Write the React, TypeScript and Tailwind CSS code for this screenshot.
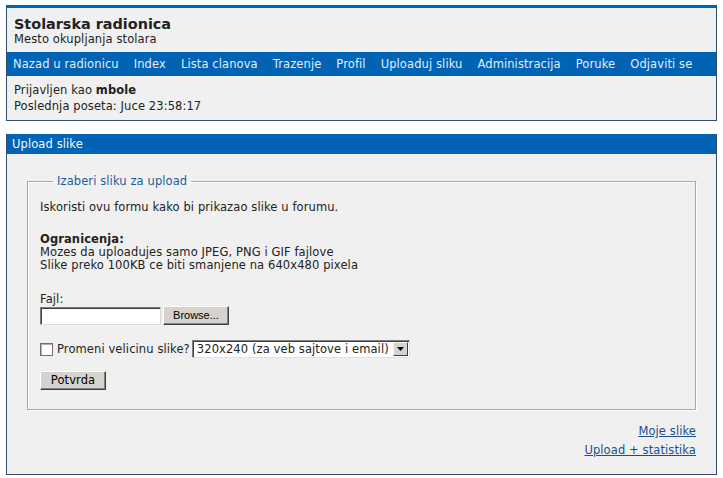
import React from "react";

const navItems = [
  "Nazad u radionicu",
  "Index",
  "Lista clanova",
  "Trazenje",
  "Profil",
  "Uploaduj sliku",
  "Administracija",
  "Poruke",
  "Odjaviti se",
];

export default function App() {
  return (
    <div className="min-h-[478px] bg-white px-[6px] pt-[5px] font-['DejaVu_Sans',Verdana,sans-serif] text-[11.5px] leading-[16px] tracking-[0.1px] text-[#222]">
      {/* Site header */}
      <div className="border border-t-[3px] border-[#34506c] border-t-[#0063b4] bg-[#f0f0f0]">
        <div className="border-t border-x border-[#e4f2fb] px-[6px] pb-[6px] pt-[7px]">
          <h1 className="text-[14.4px] font-bold leading-[16px] tracking-normal text-[#222]">Stolarska radionica</h1>
          <div className="leading-[14px]">Mesto okupljanja stolara</div>
        </div>
        <nav className="flex h-[24px] items-center gap-[15px] bg-[#0063b4] px-[6px] text-[#e3eef9]">
          {navItems.map((item) => (
            <a key={item} href="#" className="whitespace-nowrap">
              {item}
            </a>
          ))}
        </nav>
        <div className="border-x border-b border-[#e4f2fb] px-[6px] pb-[5px] pt-[6px] leading-[16px]">
          <div>
            Prijavljen kao <b>mbole</b>
          </div>
          <div>Poslednja poseta: Juce 23:58:17</div>
        </div>
      </div>

      {/* Upload panel */}
      <div className="mt-[13px] border border-t-0 border-[#34506c] bg-[#f0f0f0]">
        <div className="flex h-[20px] items-center bg-[#0063b4] px-[5px] text-[#f4f8fc]">Upload slike</div>
        <div className="border-x border-b border-[#e4f2fb] px-[19px] pb-[15px] pt-[19px]">
          <fieldset className="border border-[#a6a6a6] px-[12px] pb-[19px] pt-[4px] shadow-[inset_1px_1px_0_#fff,1px_1px_0_#fff]">
            <legend className="ml-[13px] px-[4px] text-[#1b5c9e]">Izaberi sliku za upload</legend>
            <p className="mt-[6px]">Iskoristi ovu formu kako bi prikazao slike u forumu.</p>
            <p className="mt-[18px] font-bold leading-[13px]">Ogranicenja:</p>
            <p className="leading-[13px]">Mozes da uploadujes samo JPEG, PNG i GIF fajlove</p>
            <p className="leading-[13px]">Slike preko 100KB ce biti smanjene na 640x480 pixela</p>

            <div className="mt-[21px] leading-[13px]">Fajl:</div>
            <div className="flex items-center gap-[2px]">
              <input
                type="text"
                className="h-[18px] w-[121px] border border-[#7a7a7a] border-b-[#dcdcdc] border-r-[#dcdcdc] bg-white shadow-[inset_1px_1px_0_#404040]"
              />
              <button className="h-[19px] w-[66px] border border-[#fff] border-b-[#404040] border-r-[#404040] bg-[#d6d3ce] font-['Liberation_Sans',Arial,sans-serif] text-[11px] leading-[15px] tracking-normal text-black shadow-[inset_-1px_-1px_0_#808080]">
                Browse...
              </button>
            </div>

            <div className="mt-[15px] flex items-center">
              <span className="h-[13px] w-[13px] border border-[#707070] bg-white shadow-[inset_1px_1px_0_#b0b0b0]" />
              <span className="ml-[4px]">Promeni velicinu slike?</span>
              <div className="ml-[2px] flex h-[18px] w-[218px] items-center border border-[#808080] border-b-[#e0e0e0] border-r-[#e0e0e0] bg-white shadow-[inset_1px_1px_0_#404040]">
                <span className="flex-1 whitespace-nowrap pl-[4px] leading-[14px]">320x240 (za veb sajtove i email)</span>
                <span className="mr-[1px] flex h-[14px] w-[15px] items-center justify-center border border-[#f4f4f4] border-b-[#404040] border-r-[#404040] bg-[#d6d3ce]">
                  <svg width="7" height="4" viewBox="0 0 7 4">
                    <path d="M0 0h7L3.5 4z" fill="#000" />
                  </svg>
                </span>
              </div>
            </div>

            <button className="mt-[13px] h-[19px] w-[66px] border border-[#fff] border-b-[#404040] border-r-[#404040] bg-[#d6d3ce] text-[11.5px] leading-[15px] text-black shadow-[inset_-1px_-1px_0_#808080]">
              Potvrda
            </button>
          </fieldset>

          <div className="mt-[13px] flex flex-col items-end gap-[3px] leading-[16px]">
            <a href="#" className="text-[#1d4f8c] underline">
              Moje slike
            </a>
            <a href="#" className="text-[#1d4f8c] underline">
              Upload + statistika
            </a>
          </div>
        </div>
      </div>
    </div>
  );
}
